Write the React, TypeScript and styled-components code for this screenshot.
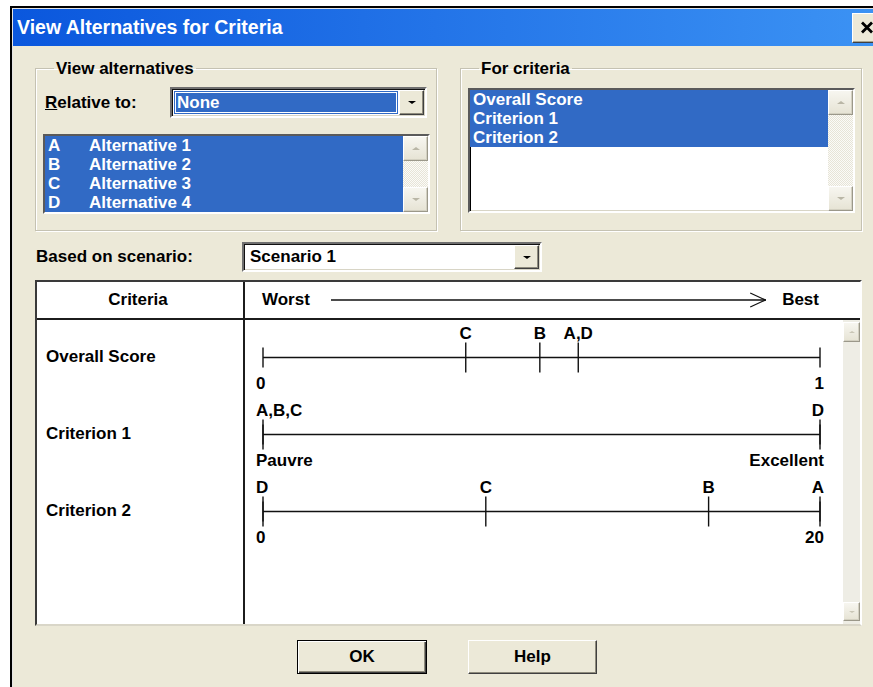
import React from "react";
import styled, { createGlobalStyle } from "styled-components";

const GlobalStyle = createGlobalStyle`
  *, *::before, *::after { box-sizing: border-box; }
  html, body { margin: 0; padding: 0; background: #fff; overflow: hidden; }
  body { font-family: "Liberation Sans", Arial, sans-serif; color: #000; }
`;

const Window = styled.div`
  margin: 6px 0 0 10px;
  width: 877px;
  height: 700px;
  border-top: 2px solid #000;
  border-left: 2px solid #000;
  padding: 1px 0 0 1px;
  background: #e4e4e4;
  display: flex;
  flex-direction: column;
`;

const TitleBar = styled.div`
  height: 37px;
  flex: none;
  display: flex;
  align-items: center;
  justify-content: space-between;
  padding: 0 5px 0 4px;
  background: linear-gradient(90deg, #0a57dd 0%, #1f6fe6 40%, #3c93f4 100%);
  color: #fff;
  font-weight: bold;
  font-size: 19.5px;
`;

const CloseButton = styled.div`
  width: 30px;
  height: 30px;
  display: flex;
  align-items: center;
  justify-content: center;
  background: #ece9d8;
  border: 1px solid;
  border-color: #fff #404040 #404040 #fff;
  box-shadow: inset -1px -1px 0 #a9a690;
`;

const Body = styled.div`
  flex: 1;
  background: #ece9d8;
  padding: 14px 25px 0 22px;
  display: flex;
  flex-direction: column;
`;

const Groups = styled.div`
  display: grid;
  grid-template-columns: 402px 402px;
  column-gap: 23px;
`;

const Group = styled.fieldset<{ $padTop: number }>`
  margin: 0;
  height: 171px;
  padding: ${(p) => p.$padTop}px 6px 0 7px;
  border: 1px solid #c5c2b2;
  box-shadow: inset 1px 1px 0 #fff, 1px 1px 0 #fff;
  min-width: 0;
  display: flex;
  flex-direction: column;
`;

const Legend = styled.legend`
  margin-left: 11px;
  padding: 0 2px;
  font-size: 17px;
  line-height: 17px;
  font-weight: bold;
`;

const RelativeRow = styled.div`
  height: 31px;
  display: flex;
  align-items: center;
  justify-content: space-between;
  padding: 0 3px 0 2px;
  margin-bottom: 16px;
`;

const Label = styled.span`
  font-size: 17px;
  font-weight: bold;
  white-space: nowrap;
`;

const Mnemonic = styled.span`
  text-decoration: underline;
`;

const Combo = styled.div<{ $w: number; $h: number }>`
  width: ${(p) => p.$w}px;
  height: ${(p) => p.$h}px;
  display: flex;
  background: #fff;
  border: 2px solid;
  border-color: #6f6f6f #fff #fff #6f6f6f;
  box-shadow: inset 1px 1px 0 #111, inset -1px -1px 0 #d8d5c6;
  padding: 1px;
`;

const ComboText = styled.div<{ $selected?: boolean }>`
  flex: 1;
  display: flex;
  align-items: center;
  padding-left: ${(p) => (p.$selected ? 3 : 5)}px;
  margin: ${(p) => (p.$selected ? "1px" : "0")};
  background: ${(p) => (p.$selected ? "#316ac5" : "transparent")};
  color: ${(p) => (p.$selected ? "#fff" : "#000")};
  outline: ${(p) => (p.$selected ? "1px solid #fff" : "none")};
  outline-offset: -2px;
  font-size: 17px;
  font-weight: bold;
`;

const DropButton = styled.div`
  width: 25px;
  flex: none;
  display: flex;
  align-items: center;
  justify-content: center;
  background: #ece9d8;
  border: 1px solid;
  border-color: #fff #404040 #404040 #fff;
  box-shadow: inset -1px -1px 0 #8e8b7c;
`;

const Caret = styled.div<{ $up?: boolean; $color: string; $size: number }>`
  width: 0;
  height: 0;
  border-left: ${(p) => p.$size}px solid transparent;
  border-right: ${(p) => p.$size}px solid transparent;
  ${(p) =>
    p.$up
      ? `border-bottom: ${Math.ceil(p.$size * 0.6)}px solid ${p.$color};`
      : `border-top: ${Math.ceil(p.$size * 0.6)}px solid ${p.$color};`}
`;

const ListBox = styled.div<{ $h: number }>`
  height: ${(p) => p.$h}px;
  display: flex;
  background: #fff;
  border: 2px solid;
  border-color: #5a5a5a #fff #fff #5a5a5a;
  box-shadow: inset 1px 1px 0 #000, inset -1px -1px 0 #d8d5c6;
`;

const Items = styled.div`
  flex: 1;
  display: flex;
  flex-direction: column;
`;

const Item = styled.div<{ $selected: boolean }>`
  height: 19px;
  flex: none;
  display: flex;
  align-items: center;
  padding-left: 3px;
  background: ${(p) => (p.$selected ? "#316ac5" : "transparent")};
  color: ${(p) => (p.$selected ? "#fff" : "#000")};
  font-size: 17px;
  font-weight: bold;
  white-space: nowrap;
`;

const Code = styled.span`
  width: 41px;
  flex: none;
`;

const ListScroll = styled.div`
  width: 25px;
  flex: none;
  display: flex;
  flex-direction: column;
  justify-content: space-between;
  background: repeating-conic-gradient(#fbfbf8 0 25%, #e7e4d7 0 50%) 0 0 / 2px 2px;
`;

const ScrollButton = styled.div<{ $h: number }>`
  height: ${(p) => p.$h}px;
  flex: none;
  display: flex;
  align-items: center;
  justify-content: center;
  background: linear-gradient(#f7f6f0, #e6e3d4);
  border: 1px solid;
  border-color: #fff #9b988a #9b988a #fff;
  box-shadow: inset -1px -1px 0 #d3d0c1;
`;

const ScenarioRow = styled.div`
  margin-top: 11px;
  height: 30px;
  display: flex;
  align-items: center;
`;

const ScenarioLabel = styled(Label)`
  width: 207px;
  padding-left: 1px;
`;

const Table = styled.div`
  margin-top: 8px;
  height: 346px;
  display: flex;
  flex-direction: column;
  background: #fff;
  border: 2px solid;
  border-color: #3a3a3a #fff #d9d6c8 #3a3a3a;
`;

const HeaderRow = styled.div`
  height: 38px;
  flex: none;
  display: flex;
  border-bottom: 2px solid #1c1c1c;
`;

const CriteriaHead = styled.div`
  width: 208px;
  flex: none;
  display: flex;
  align-items: center;
  justify-content: center;
  padding-right: 4px;
  border-right: 2px solid #1c1c1c;
  font-size: 17px;
  font-weight: bold;
`;

const RangeHead = styled.div`
  flex: 1;
  display: flex;
  align-items: center;
  padding: 0 41px 0 17px;
  font-size: 17px;
  font-weight: bold;
`;

const ArrowLine = styled.svg`
  flex: 1;
  height: 16px;
  margin: 0 16px 0 21px;
`;

const TableBody = styled.div`
  flex: 1;
  display: flex;
  min-height: 0;
`;

const NameColumn = styled.div`
  width: 208px;
  flex: none;
  border-right: 2px solid #1c1c1c;
  display: flex;
  flex-direction: column;
`;

const NameCell = styled.div`
  height: 77px;
  flex: none;
  display: flex;
  align-items: center;
  padding: 0 0 3px 9px;
  font-size: 17px;
  font-weight: bold;
`;

const GraphColumn = styled.div`
  flex: 1;
  display: flex;
  flex-direction: column;
`;

const ScaleRow = styled.svg`
  display: block;
  flex: none;
  height: 77px;
  width: 100%;
`;

const TableScroll = styled.div`
  width: 17px;
  flex: none;
  display: flex;
  flex-direction: column;
  justify-content: space-between;
  padding: 2px 0 3px;
  background: #eeede5;
`;

const Buttons = styled.div`
  margin-top: 14px;
  padding-right: 3px;
  display: flex;
  justify-content: center;
  gap: 41px;
`;

const PushButton = styled.div<{ $default?: boolean }>`
  width: ${(p) => (p.$default ? 130 : 129)}px;
  height: 34px;
  display: flex;
  align-items: center;
  justify-content: center;
  font-size: 17px;
  font-weight: bold;
  background: #ece9d8;
  border: 1px solid;
  border-color: ${(p) => (p.$default ? "#000" : "#fff #404040 #404040 #fff")};
  box-shadow: ${(p) =>
    p.$default
      ? "inset 1px 1px 0 #fff, inset -1px -1px 0 #404040, inset -2px -2px 0 #8e8b7c"
      : "inset -1px -1px 0 #8e8b7c"};
`;

type Mark = { label: string; at: number };
type Scale = { name: string; min: string; max: string; marks: Mark[] };

const alternatives = [
  { code: "A", name: "Alternative 1" },
  { code: "B", name: "Alternative 2" },
  { code: "C", name: "Alternative 3" },
  { code: "D", name: "Alternative 4" },
];

const criteria = ["Overall Score", "Criterion 1", "Criterion 2"];

const scales: Scale[] = [
  {
    name: "Overall Score",
    min: "0",
    max: "1",
    marks: [
      { label: "C", at: 0.364 },
      { label: "B", at: 0.497 },
      { label: "A,D", at: 0.566 },
    ],
  },
  {
    name: "Criterion 1",
    min: "Pauvre",
    max: "Excellent",
    marks: [
      { label: "A,B,C", at: 0 },
      { label: "D", at: 1 },
    ],
  },
  {
    name: "Criterion 2",
    min: "0",
    max: "20",
    marks: [
      { label: "D", at: 0 },
      { label: "C", at: 0.4 },
      { label: "B", at: 0.8 },
      { label: "A", at: 1 },
    ],
  },
];

// axis geometry inside a graph row
const X0 = 18;
const X1 = 575;
const AXIS_Y = 37.5;

const textProps = {
  fontFamily: "'Liberation Sans', Arial, sans-serif",
  fontWeight: "bold" as const,
  fontSize: 17,
  fill: "#000",
};

const anchorFor = (at: number) => {
  if (at <= 0) return { x: X0 - 7, anchor: "start" as const };
  if (at >= 1) return { x: X1 + 4, anchor: "end" as const };
  return { x: X0 + at * (X1 - X0), anchor: "middle" as const };
};

const ScaleGraph = ({ scale }: { scale: Scale }) => (
  <ScaleRow>
    <line x1={X0} y1={AXIS_Y} x2={X1} y2={AXIS_Y} stroke="#111" strokeWidth={1.4} />
    <line x1={X0} y1={AXIS_Y - 10} x2={X0} y2={AXIS_Y + 10} stroke="#111" strokeWidth={1.4} />
    <line x1={X1} y1={AXIS_Y - 10} x2={X1} y2={AXIS_Y + 10} stroke="#111" strokeWidth={1.4} />
    {scale.marks.map((m) => {
      const x = X0 + m.at * (X1 - X0);
      const t = anchorFor(m.at);
      return (
        <g key={m.label}>
          <line x1={x} y1={AXIS_Y - 15} x2={x} y2={AXIS_Y + 15} stroke="#111" strokeWidth={1.4} />
          <text x={t.x} y={19} textAnchor={t.anchor} {...textProps}>
            {m.label}
          </text>
        </g>
      );
    })}
    <text x={X0 - 7} y={69} textAnchor="start" {...textProps}>
      {scale.min}
    </text>
    <text x={X1 + 4} y={69} textAnchor="end" {...textProps}>
      {scale.max}
    </text>
  </ScaleRow>
);

const Scrollbar = ({ btn }: { btn: number }) => (
  <ListScroll>
    <ScrollButton $h={btn}>
      <Caret $up $color="#b9b6a6" $size={4} />
    </ScrollButton>
    <ScrollButton $h={btn}>
      <Caret $color="#b9b6a6" $size={4} />
    </ScrollButton>
  </ListScroll>
);

const App = () => {
  return (
    <>
      <GlobalStyle />
      <Window>
        <TitleBar>
          <span>View Alternatives for Criteria</span>
          <CloseButton>
            <svg width="14" height="13" viewBox="0 0 14 13">
              <path d="M2 1.5 L12 11.5 M12 1.5 L2 11.5" stroke="#000" strokeWidth="2.8" />
            </svg>
          </CloseButton>
        </TitleBar>
        <Body>
          <Groups>
            <Group $padTop={10}>
              <Legend>View alternatives</Legend>
              <RelativeRow>
                <Label>
                  <Mnemonic>R</Mnemonic>elative to:
                </Label>
                <Combo $w={257} $h={31}>
                  <ComboText $selected>None</ComboText>
                  <DropButton>
                    <Caret $color="#000" $size={4} />
                  </DropButton>
                </Combo>
              </RelativeRow>
              <ListBox $h={80}>
                <Items>
                  {alternatives.map((a) => (
                    <Item key={a.code} $selected>
                      <Code>{a.code}</Code>
                      {a.name}
                    </Item>
                  ))}
                </Items>
                <Scrollbar btn={25} />
              </ListBox>
            </Group>
            <Group $padTop={11}>
              <Legend>For criteria</Legend>
              <ListBox $h={125}>
                <Items>
                  {criteria.map((c) => (
                    <Item key={c} $selected>
                      {c}
                    </Item>
                  ))}
                </Items>
                <Scrollbar btn={25} />
              </ListBox>
            </Group>
          </Groups>

          <ScenarioRow>
            <ScenarioLabel>Based on scenario:</ScenarioLabel>
            <Combo $w={300} $h={30}>
              <ComboText>Scenario 1</ComboText>
              <DropButton>
                <Caret $color="#000" $size={4} />
              </DropButton>
            </Combo>
          </ScenarioRow>

          <Table>
            <HeaderRow>
              <CriteriaHead>Criteria</CriteriaHead>
              <RangeHead>
                Worst
                <ArrowLine preserveAspectRatio="none" viewBox="0 0 434 16">
                  <line x1="0" y1="8" x2="434" y2="8" stroke="#111" strokeWidth="1.3" />
                  <polyline points="418,1 433,8 418,15" fill="none" stroke="#111" strokeWidth="1.3" />
                </ArrowLine>
                Best
              </RangeHead>
            </HeaderRow>
            <TableBody>
              <NameColumn>
                {scales.map((s) => (
                  <NameCell key={s.name}>{s.name}</NameCell>
                ))}
              </NameColumn>
              <GraphColumn>
                {scales.map((s) => (
                  <ScaleGraph key={s.name} scale={s} />
                ))}
              </GraphColumn>
              <TableScroll>
                <ScrollButton $h={20}>
                  <Caret $up $color="#c9c6b6" $size={3} />
                </ScrollButton>
                <ScrollButton $h={19}>
                  <Caret $color="#c9c6b6" $size={3} />
                </ScrollButton>
              </TableScroll>
            </TableBody>
          </Table>

          <Buttons>
            <PushButton $default>OK</PushButton>
            <PushButton>Help</PushButton>
          </Buttons>
        </Body>
      </Window>
    </>
  );
};

export default App;
